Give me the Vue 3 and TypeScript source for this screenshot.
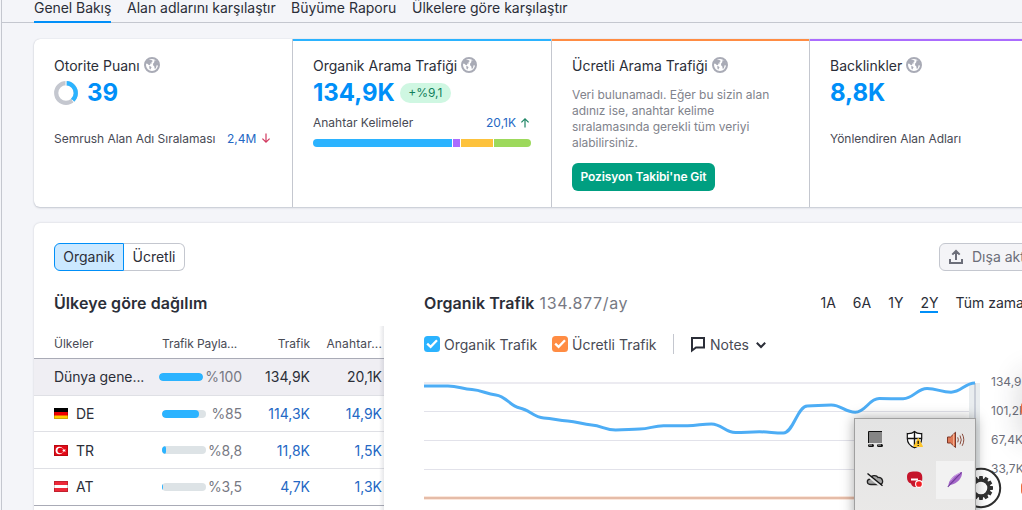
<script setup lang="ts">
interface Country {
  name: string
  flag: string
  share: string
  fill: number
  traffic: string
  keywords: string
}

const tabs = ['Genel Bakış', 'Alan adlarını karşılaştır', 'Büyüme Raporu', 'Ülkelere göre karşılaştır']
const ranges = ['1A', '6A', '1Y', '2Y', 'Tüm zamanlar']

const countries: Country[] = [
  { name: 'Dünya gene...', flag: '', share: '%100', fill: 100, traffic: '134,9K', keywords: '20,1K' },
  { name: 'DE', flag: 'de', share: '%85', fill: 85, traffic: '114,3K', keywords: '14,9K' },
  { name: 'TR', flag: 'tr', share: '%8,8', fill: 9.5, traffic: '11,8K', keywords: '1,5K' },
  { name: 'AT', flag: 'at', share: '%3,5', fill: 3, traffic: '4,7K', keywords: '1,3K' },
]

const values = [
  11, 11, 14.5, 20, 33, 43, 46, 50, 55, 54, 50.8, 50.8,
  48.9, 57.6, 56.8, 58, 31, 30, 37.3, 23.6, 23.7, 13.6, 17.2, 8,
]
const step = 551 / (values.length - 1)

function tangent(i: number): number {
  if (i === 0 || i === values.length - 1) return 0
  const before = values[i] - values[i - 1]
  const after = values[i + 1] - values[i]
  if (before * after <= 0) return 0
  return Math.sign(before) * Math.min(Math.abs(before), Math.abs(after)) * 0.5
}

const linePath = values
  .map((v, i) => {
    const x = i * step
    if (i === 0) return `M${x} ${v}`
    const c1 = values[i - 1] + tangent(i - 1) / 2.4
    const c2 = v - tangent(i) / 2.4
    return `C${x - step * 0.58} ${c1} ${x - step * 0.42} ${c2} ${x} ${v}`
  })
  .join('')

const teeth = Array.from({ length: 12 }, (_, i) => i * 30)
const cards = [
  { title: 'Otorite Puanı', kind: 'authority' },
  { title: 'Organik Arama Trafiği', kind: 'organic' },
  { title: 'Ücretli Arama Trafiği', kind: 'paid' },
  { title: 'Backlinkler', kind: 'links' },
]
</script>

<template>
  <div class="page">
    <nav class="tabs">
      <a v-for="(t, i) in tabs" :key="t" :class="['tab', 't' + i, { active: i === 0 }]">{{ t }}</a>
    </nav>

    <section class="cards">
      <article v-for="c in cards" :key="c.kind" :class="['card', c.kind]">
        <h3>
          <span>{{ c.title }}</span>
          <svg class="globe" viewBox="0 0 16 16">
            <circle cx="8" cy="8" r="7" fill="#fff" stroke="#a9abb6" stroke-width="2" />
            <path d="M2 4.600 4 2.500 8.200 3.200 8.600 4.600 7.400 5 7.800 6.400 6.400 6.600 6 8.200 4.800 8 3.400 6.800 1.600 6.600z" fill="#a9abb6" />
            <path d="M5.200 9 7 9.400 7.400 10.600 6.400 12.400 5.600 12z" fill="#a9abb6" />
            <path d="M9 6.800 10.400 5 10.200 3.600 12.400 3.200 14.400 6.200 14 8.600 12.600 8.200 12 11 10.800 12 10.200 9.200 9.200 8.600z" fill="#a9abb6" />
          </svg>
        </h3>

        <template v-if="c.kind === 'authority'">
          <div class="score">
            <svg class="ring" viewBox="0 0 24 24">
              <circle cx="12" cy="12" r="9.8" fill="none" stroke="#c4c7cf" stroke-width="4.2" />
              <circle cx="12" cy="12" r="9.8" fill="none" stroke="#2bb3ff" stroke-width="4.2" pathLength="100" stroke-dasharray="38 62" transform="rotate(-88 12 12)" />
              <path d="M12 0v4.5M18.2 18.8l2 3" stroke="#fff" stroke-width="1" />
            </svg>
            <strong class="big">39</strong>
          </div>
          <div class="rank">
            <span class="dark rank-name">Semrush Alan Adı Sıralaması</span>
            <a class="num">2,4M</a>
            <svg class="arrow down" viewBox="0 0 10 10"><path d="M5 .5V9M1.400 5.600 5 9.200l3.600-3.600" fill="none" stroke="#d1395f" stroke-width="1.2" /></svg>
          </div>
        </template>

        <template v-else-if="c.kind === 'organic'">
          <div class="value">
            <strong class="big">134,9K</strong>
            <span class="badge">+%9,1</span>
          </div>
          <div class="keywords">
            <span class="dark">Anahtar Kelimeler</span>
            <span class="right">
              <a>20,1K</a>
              <svg class="arrow" viewBox="0 0 10 10"><path d="M5 9.5V1M1.400 4.400 5 .8l3.600 3.600" fill="none" stroke="#1f8666" stroke-width="1.2" /></svg>
            </span>
          </div>
          <div class="split"><i class="s1" /><i class="s2" /><i class="s3" /><i class="s4" /></div>
        </template>

        <template v-else-if="c.kind === 'paid'">
          <p class="empty">Veri bulunamadı. Eğer bu sizin alan<br />adınız ise, anahtar kelime<br />sıralamasında gerekli tüm veriyi<br />alabilirsiniz.</p>
          <button class="cta">Pozisyon Takibi'ne Git</button>
        </template>

        <template v-else>
          <div class="value"><strong class="big">8,8K</strong></div>
          <div class="refs dark">Yönlendiren Alan Adları</div>
        </template>
      </article>
    </section>

    <section class="panel">
      <div class="toolbar">
        <div class="toggle">
          <button class="on">Organik</button><button class="off">Ücretli</button>
        </div>
        <button class="export">
          <svg viewBox="0 0 16 16"><path d="M8 11V2.200M4.300 5.600 8 1.900l3.700 3.700M2 10v4h12v-4" fill="none" stroke="#6c6e79" stroke-width="2" /></svg>
          <span>Dışa aktar</span>
        </button>
      </div>

      <div class="body">
        <div class="left">
          <h2>Ülkeye göre dağılım</h2>
          <div class="table">
            <div class="row head">
              <span class="c1">Ülkeler</span><span class="c2">Trafik Payla...</span><span class="c3">Trafik</span><span class="c4">Anahtar...</span>
            </div>
            <div v-for="r in countries" :key="r.name" :class="['row', { world: !r.flag }]">
              <span class="c1">
                <svg v-if="r.flag" class="flag" viewBox="0 0 14 11">
                  <template v-if="r.flag === 'de'">
                    <path fill="#000" d="M0 0h14v4H0z" /><path fill="#e00" d="M0 4h14v4H0z" /><path fill="#fc0" d="M0 7.500h14V11H0z" />
                  </template>
                  <template v-else-if="r.flag === 'tr'">
                    <path fill="#e30a17" d="M0 0h14v11H0z" />
                    <circle cx="5.3" cy="5.5" r="3.7" fill="#fff" /><circle cx="6.3" cy="5.5" r="2.8" fill="#e30a17" />
                    <path fill="#fff" d="m8 5.500 1.300-.5.2-1.400 1 1.100 1.300-.4-.7 1.200.7 1.200-1.300-.4-1 1.100-.2-1.400z" />
                  </template>
                  <template v-else>
                    <path fill="#ed2939" d="M0 0h14v11H0z" /><path fill="#fff" d="M0 4h14v3H0z" />
                  </template>
                  <path d="M.5.5h13v10H.5z" fill="none" stroke="#000" stroke-opacity=".18" />
                </svg>
                {{ r.name }}
              </span>
              <span class="c2"><i class="bar"><b :style="{ width: r.fill + '%' }" /></i>{{ r.share }}</span>
              <span class="c3">{{ r.traffic }}</span>
              <span class="c4">{{ r.keywords }}</span>
            </div>
            <div class="fade" />
          </div>
        </div>

        <div class="right-side">
          <div class="chart-head">
            <h2>Organik Trafik <small>134.877/ay</small></h2>
            <div class="ranges">
              <a v-for="(g, i) in ranges" :key="g" :class="['r' + i, { sel: g === '2Y' }]">{{ g }}</a>
            </div>
          </div>
          <div class="legend">
            <svg class="check" viewBox="0 0 16 16"><rect width="16" height="16" rx="3.5" fill="#2bb3ff" /><path d="m3.200 7.600 3.400 3.300 6.400-6.600" fill="none" stroke="#fff" stroke-width="2.3" /></svg>
            <span class="l1">Organik Trafik</span>
            <svg class="check" viewBox="0 0 16 16"><rect width="16" height="16" rx="3.5" fill="#ff8c43" /><path d="m3.200 7.600 3.400 3.300 6.400-6.600" fill="none" stroke="#fff" stroke-width="2.3" /></svg>
            <span class="l2">Ücretli Trafik</span>
            <i class="sep" />
            <svg class="note" viewBox="0 0 16 16"><path d="M2 2h12v9.500H6L2 14.500z" fill="none" stroke="#2b2e38" stroke-width="2" /></svg>
            <span class="l3">Notes</span>
            <svg class="chev" viewBox="0 0 10 8"><path d="m.8 1.800 4.200 4.200 4.200-4.200" fill="none" stroke="#2b2e38" stroke-width="2" /></svg>
          </div>
          <div class="chart">
            <svg class="plot" viewBox="0 0 560 135">
              <path d="M0 8h551" stroke="#ecebf1" stroke-width="2" />
              <path d="M0 36.500h551M0 65.500h551M0 94.500h551" stroke="#e2e2ea" />
              <path d="M545 8h11v127h-11z" fill="#e9edef" />
              <path d="M550 8h2v127h-2z" fill="#c9ced7" />
              <path d="M0 123h551" stroke="#fbe7dc" stroke-width="4" />
              <path d="M0 123h551" stroke="#e5bca8" stroke-width="2" />
              <path :d="linePath" fill="none" stroke="#4dadf5" stroke-width="3" />
            </svg>
            <div class="axis"><span>134,9K</span><span>101,2K</span><span>67,4K</span><span>33,7K</span></div>
          </div>
        </div>
      </div>
    </section>

    <div class="edge" />
    <div class="dot d1" /><div class="dot d2" />
    <svg class="gear" viewBox="0 0 42 42">
      <circle cx="21" cy="21" r="19.2" fill="#fff" stroke="#2e2e2e" stroke-width="2" />
      <path v-for="a in teeth" :key="a" d="M19.300 9h3.400l.7 5h-4.800z" fill="#333" :transform="`rotate(${a} 21 21)`" />
      <circle cx="21" cy="21" r="7.900" fill="none" stroke="#333" stroke-width="3.200" />
    </svg>

    <div class="tray">
      <svg viewBox="0 0 40 40"><path d="M14 12h13v11H14z" fill="#858585" /><path d="M13.500 23V11.500H27" fill="none" stroke="#111" /><path d="M14.500 25.500h3M23.500 25.500h3" stroke="#111" stroke-width="3" stroke-linecap="round" /><path d="M14 25h3M23 25h3" stroke="#bbb" /></svg>
      <svg viewBox="0 0 40 40">
        <path d="M19.500 11.500c2 1.800 4.500 2.200 7.200 2v5c0 4.500-3 7.500-7.200 9.300-4.200-1.800-7.200-4.800-7.200-9.300v-5c2.700.2 5.200-.2 7.200-2z" fill="#fff" stroke="#111" stroke-width="1.2" />
        <path d="M19.500 12v15.500M12.500 18.500h14.200" stroke="#111" stroke-width="1.4" />
        <path d="M23.200 18.300 27.500 26.500h-8.600z" fill="#ffc629" stroke="#ffc629" stroke-linejoin="round" /><path d="M23.200 20.700v3.200M23.200 24.900v1.200" stroke="#111" stroke-width="1.3" />
      </svg>
      <svg viewBox="0 0 40 40">
        <path d="M12.500 17h3l5-4.800v15.300l-5-4.500h-3z" fill="#df7956" stroke="#7c3828" /><path d="M18.500 14.200v11.500" stroke="#f2ae8e" /><path d="M22.700 17.300q1.300 2.500 0 5M25 15.500q2.500 4.400 0 8.800M27.200 13.800q3.200 6 0 12" fill="none" stroke="#8b4b3c" stroke-width="1" />
      </svg>
      <svg viewBox="0 0 40 40">
        <path d="M16 24.500c-4.800 0-4.600-5-1-5.500.5-4 6.500-4.500 8-1.500 5-.5 6.500 6.500 1.800 7z" fill="#a5a5a5" stroke="#222" stroke-width="1.3" /><path d="m12 15 15 12" stroke="#e8e8e8" stroke-width="2.400" /><path d="m12.500 13.500 15 12.300" stroke="#111" stroke-width="1.4" />
      </svg>
      <svg viewBox="0 0 40 40">
        <path d="M12 17c0-4.500 2.500-5.500 8-5.500 5.300 0 7.300 1.500 7.300 6.200 0 6.500-2.500 9.500-7 9.300-2.500-.1-3.600-1.500-4.300-3.600-2.800-.6-4-2.800-4-6.400z" fill="#c5152b" /><path d="M16 19.500h7" stroke="#fff" stroke-width="2" /><circle cx="24" cy="24" r="3.400" fill="#f21d24" stroke="#fff" stroke-width="1.1" />
      </svg>
      <svg class="hot" viewBox="1 1 38 38">
        <path d="M13.500 26.500c-.5-6 5-12 13.500-14.500.6 6-4.500 11.500-11.500 13z" fill="#a568c9" /><path d="m12.800 27 3-3.500L26.500 12.300" fill="none" stroke="#6f3a99" stroke-width="1.1" /><path d="M15.500 20.500q4-6 9.500-7.500" stroke="#d2a9e7" fill="none" />
      </svg>
    </div>
  </div>
</template>

<style>
body { background: #f4f5f9; overflow: hidden; }
</style>

<style scoped>
.page { position: relative; box-sizing: border-box; width: 1022px; height: 510px; overflow: hidden; background: #f4f5f9; border-left: 1px solid #f4f5f9; color: #2b2e38; font-family: Inter, "Liberation Sans", sans-serif; font-size: 14px; box-shadow: inset 1px 0 #c4c7cf; }
h2, h3, p { margin: 0; font-weight: 400; }
button { font: inherit; margin: 0; box-sizing: border-box; }
svg { display: block; flex: none; overflow: visible; }
a { color: #2468c4; }
.tabs { display: flex; height: 23px; box-sizing: border-box; margin-left: 1px; padding-left: 32px; border-bottom: 1px solid #c4c7cf; }
.tab { box-sizing: border-box; height: 23px; line-height: 15px; white-space: nowrap; color: #2b2e38; margin-right: 16px; }
.tab.active { border-bottom: 2px solid #008ff8; letter-spacing: -.05px; }
.t0 { width: 77px; } .t1 { width: 148px; } .t2 { width: 105px; }
.cards { display: flex; width: 1100px; height: 168px; margin: 16px 0 0 33px; background: #fff; border-radius: 6px; box-shadow: 0 0 1px #b9bcc8, 0 1px 2px #c5c8d1; }
.card { box-sizing: border-box; width: 259px; flex: none; padding: 17px 20px 0; border-right: 1px solid #c4c7cf; }
.card:last-child { flex: 1; border-right: 0; }
.card.organic { box-shadow: inset 0 2px #2bb3ff; }
.card.paid { width: 258px; box-shadow: inset 0 2px #ff8c43; }
.card.links { box-shadow: inset 0 2px #ab6cfe; }
h3 { display: flex; align-items: center; gap: 4px; height: 18px; font-size: 14px; white-space: nowrap; }
.globe { width: 16px; height: 16px; }
.score, .value { display: flex; align-items: center; height: 24px; margin-top: 7px; }
.ring { width: 24px; height: 24px; margin-right: 9px; }
.big { font-size: 24px; font-weight: 700; line-height: 24px; color: #008ff8; }
.badge { margin-left: 5px; height: 20px; width: 51px; border-radius: 10px; background: #cff7e2; color: #12805c; text-align: center; font-size: 12px; line-height: 20px; }
.dark { color: #484a54; }
.rank { display: flex; align-items: center; margin-top: 25px; height: 16px; font-size: 12px; white-space: nowrap; }
.rank-name { width: 161px; letter-spacing: -.02px; }
.num { margin-left: 12px; } .arrow { width: 10px; height: 10px; } .down { margin-left: 5px; }
.keywords { display: flex; justify-content: space-between; width: 217px; height: 16px; margin-top: 10px; line-height: 16px; font-size: 12px; }
.right { display: flex; align-items: center; gap: 4px; }
.split { display: flex; gap: 1px; width: 218px; height: 8px; margin-top: 8px; border-radius: 4px; overflow: hidden; }
.split i { display: block; } .s1 { width: 139px; background: #2bb3ff; } .s2 { width: 7px; background: #ab6cfe; } .s3 { width: 32px; background: #fdc23c; } .s4 { flex: 1; background: #9dd95c; }
.empty { margin-top: 13px; font-size: 12px; line-height: 16px; color: #81838c; letter-spacing: -.03px; white-space: nowrap; }
.cta { display: block; width: 143px; height: 28px; margin-top: 12px; padding: 0 0 1px; border: 0; border-radius: 6px; background: #009f81; color: #fff; font-size: 12px; font-weight: 600; letter-spacing: -.1px; white-space: nowrap; }
.refs { margin-top: 26px; font-size: 12px; line-height: 16px; letter-spacing: -.03px; }
.panel { width: 1100px; height: 300px; margin: 16px 0 0 33px; background: #fff; border-radius: 6px; box-shadow: 0 0 2px #c5c8d1; }
.toolbar { display: flex; justify-content: space-between; width: 989px; padding: 20px 0 0 20px; box-sizing: border-box; height: 48px; }
.toggle { display: flex; width: 131px; height: 28px; }
.toggle button { height: 28px; padding: 0 0 1px; font-size: 14px; color: #2b2e38; }
.on { width: 70px; border: 1px solid #008ff8; border-radius: 6px 0 0 6px; background: #cbe8ff; }
.off { width: 61px; border: 1px solid #c4c7cf; border-left: 0; border-radius: 0 6px 6px 0; background: #fff; }
.export { display: flex; align-items: center; flex: none; width: 120px; height: 28px; padding: 0 8px; margin-right: -36px; border: 1px solid #c4c7cf; border-radius: 6px; background: #f4f4f7; color: #6c6e79; gap: 8px; white-space: nowrap; }
.export svg { width: 16px; height: 16px; }
.export span { margin-top: -2px; }
.body { display: flex; }
.left { width: 350px; flex: none; padding-top: 22px; }
h2 { height: 20px; line-height: 20px; font-size: 16px; font-weight: 600; white-space: nowrap; letter-spacing: .08px; }
.left h2 { padding-left: 20px; }
.table { position: relative; margin-top: 13px; height: 190px; }
.row { display: flex; align-items: center; box-sizing: border-box; height: 36.700px; border-bottom: 1px solid #dfe0e5; white-space: nowrap; }
.row.head { height: 33px; padding-top: 2px; border-color: #a9abb6; font-size: 12px; color: #484a54; }
.row:nth-child(5) { border-color: #a9abb6; }
.row.world { background: #efeef3; }
.row > span { display: flex; align-items: center; flex: none; }
.row .c1 { width: 104px; padding-left: 20px; }
.row.world .c1 { letter-spacing: -.08px; }
.row .c2 { width: 84px; justify-content: flex-end; color: #777983; letter-spacing: -.1px; }
.row .c3 { width: 68px; justify-content: flex-end; color: #2468c4; }
.row .c4 { width: 72px; justify-content: flex-end; color: #2468c4; }
.row.world .c3, .row.world .c4 { color: #2b2e38; }
.row.head .c2 { justify-content: flex-start; width: 76px; padding-left: 4px; margin-right: 4px; color: inherit; }
.row.head .c3, .row.head .c4 { color: inherit; }
.row.head .c4 { letter-spacing: .15px; }
.flag { width: 14px; height: 11px; margin-right: 8px; }
.bar { display: block; width: 44px; height: 8px; margin-right: auto; margin-left: 4px; border-radius: 4px; overflow: hidden; background: #dde3e6; }
.world .bar { margin-left: 1px; }
.bar b { display: block; height: 8px; border-radius: 4px; background: #2bb3ff; }
.fade { position: absolute; top: 0; right: 0; width: 5px; height: 190px; background: linear-gradient(90deg, rgba(60,65,85,0), rgba(60,65,85,.12)); }
.right-side { width: 700px; flex: none; padding: 22px 0 0 40px; box-sizing: border-box; }
.chart-head { display: flex; width: 700px; height: 20px; }
h2 small { margin-left: 1px; font-size: 16px; font-weight: 400; color: #777983; letter-spacing: .65px; }
.chart-head h2 { width: 396.500px; flex: none; }
.ranges { display: flex; line-height: 20px; }
.ranges a { color: #2b2e38; margin-right: 17px; white-space: nowrap; }
.ranges .sel { height: 18px; border-bottom: 2px solid #008ff8; }
.legend { display: flex; align-items: center; height: 20px; margin-top: 21px; white-space: nowrap; color: #484a54; }
.check { width: 16px; height: 16px; margin-right: 4px; }
.l1 { width: 93px; margin-right: 15px; } .l2 { width: 85px; margin-right: 16px; }
.sep { width: 1px; height: 20px; margin-right: 16px; background: #c4c7cf; }
.note { width: 16px; height: 16px; margin-right: 4px; } .l3 { width: 39px; margin-right: 7px; } .chev { width: 10px; height: 8px; margin-top: 2px; }
.chart { display: flex; margin-top: 21px; }
.plot { width: 560px; height: 135px; flex: none; }
.axis { display: flex; flex-direction: column; padding-left: 7px; font-size: 12px; line-height: 29px; margin-top: -8px; color: #6c6e79; }
.edge { position: absolute; right: -20px; top: 372px; width: 20px; height: 70px; border-radius: 20px; box-shadow: 0 0 28px rgba(40,40,50,.22); }
.dot { position: absolute; left: 1020px; width: 8px; border-radius: 4px; background: #ef6a3a; }
.d1 { top: 402px; height: 14px; } .d2 { top: 482px; height: 13px; }
.gear { position: absolute; left: 959px; top: 467px; width: 42px; height: 42px; }
.tray { position: absolute; left: 853px; top: 418px; display: grid; grid-template-columns: repeat(3, 40px); grid-auto-rows: 40px; width: 120px; height: 99px; padding-top: 1px; border: 1px solid #a0a0a0; background: linear-gradient(#e4e4e4, #eae9e8); box-shadow: 0 0 12px rgba(0,0,0,.34); }
.tray svg { width: 40px; height: 40px; }
.tray .hot { width: 38px; height: 38px; background: #f2f2f2; margin: 1px; overflow: hidden; }
</style>
